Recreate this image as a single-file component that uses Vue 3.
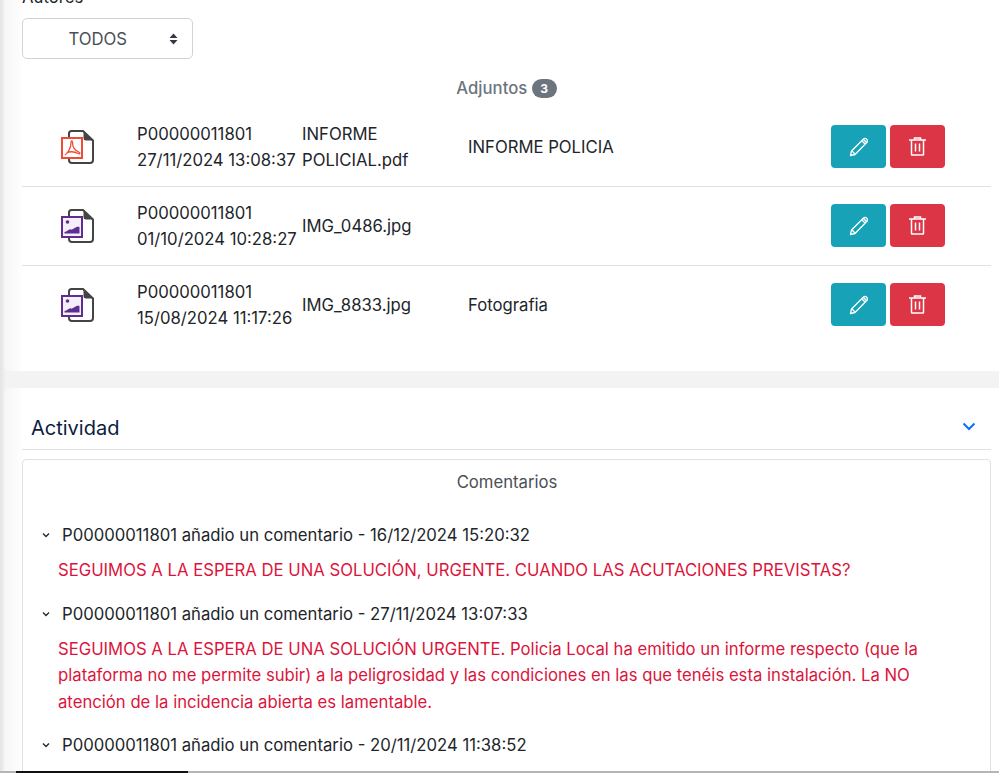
<script setup>
const files = [
  { kind: 'pdf', date: '27/11/2024 13:08:37', name: 'INFORME POLICIAL.pdf', desc: 'INFORME POLICIA' },
  { kind: 'img', date: '01/10/2024 10:28:27', name: 'IMG_0486.jpg', desc: '' },
  { kind: 'img', date: '15/08/2024 11:17:26', name: 'IMG_8833.jpg', desc: 'Fotografia' },
]
const comments = [
  { head: 'P00000011801 añadio un comentario - 16/12/2024 15:20:32', body: 'SEGUIMOS A LA ESPERA DE UNA SOLUCIÓN, URGENTE. CUANDO LAS ACUTACIONES PREVISTAS?' },
  { head: 'P00000011801 añadio un comentario - 27/11/2024 13:07:33', body: 'SEGUIMOS A LA ESPERA DE UNA SOLUCIÓN URGENTE. Policia Local ha emitido un informe respecto (que la plataforma no me permite subir) a la peligrosidad y las condiciones en las que tenéis esta instalación. La NO atención de la incidencia abierta es lamentable.' },
  { head: 'P00000011801 añadio un comentario - 20/11/2024 11:38:52', body: '' },
]
</script>

<template>
  <div class="page">
    <section class="card first">
      <div class="label">Autores</div>
      <div class="select">
        <span class="select-text">TODOS</span>
        <svg class="updown" width="9" height="12" viewBox="0 0 9 12"><path d="M4.500 0.500 8.500 5H.5zM4.500 11.500.5 7h8z" fill="#343a40"/></svg>
      </div>
      <div class="attach-title">Adjuntos <span class="badge">3</span></div>
      <div class="row" v-for="(f, i) in files" :key="i">
        <div class="icon-cell">
          <svg width="36" height="36" viewBox="0 0 36 36" fill="none">
            <path d="M9 8V4.500Q9 2 11.500 2H23L33 11.500V31Q33 34 30 34H12Q9 34 9 31V29" stroke="#444" stroke-width="2"/>
            <path d="M23.500 2 33 11.500H26Q23.500 11.500 23.500 9z" fill="#444"/>
            <template v-if="f.kind === 'pdf'">
              <rect x="2" y="9" width="20" height="20" fill="#fff" stroke="#ef4b37" stroke-width="2"/>
              <path d="M5 26C8 24 11 19 11 13.500 11 11.500 12.500 11.500 12.500 13.500 12.500 19 15.500 22 19.500 23.500 20.500 24 19.500 25.500 18 24.500 14 22 9 22.500 6.500 24" stroke="#ef4b37" stroke-width="1.300"/>
            </template>
            <template v-else>
              <rect x="2" y="9" width="20" height="20" fill="#f3eef8" stroke="#5f2d91" stroke-width="2"/>
              <circle cx="7.500" cy="14" r="1.800" fill="#5f2d91"/>
              <path d="M4.500 24C7.500 24 9 20.500 11 21.500 13 22.500 15 18 19.500 19V25.500H4.500z" fill="#5f2d91"/>
            </template>
          </svg>
        </div>
        <div class="who">P00000011801<br>{{ f.date }}</div>
        <div class="fname">{{ f.name }}</div>
        <div class="desc">{{ f.desc }}</div>
        <div class="actions">
          <button class="btn edit" type="button">
            <svg width="20" height="20" viewBox="0 0 20 20" fill="none"><path d="M1.500 18.500 2.500 14 14 2.500C15 1.500 16.500 1 17.500 2 18.800 3.200 18.500 4.700 17.500 5.700L6 17.500zM3 14 6 17M13 4 16 7" stroke="#fff" stroke-width="1.300" stroke-linejoin="round"/><path d="M14.500 2 18 5.500 17.500 6 14 2.500z" fill="#fff" stroke="#fff"/></svg>
          </button>
          <button class="btn del" type="button">
            <svg width="17" height="19" viewBox="0 0 17 19" fill="none"><path d="M0 3H17M5.500 3V1H11.500V3M2.500 3V17.500Q2.500 18 3 18H14Q14.500 18 14.500 17.500V3M6.500 6.500V14.500M10.500 6.500V14.500" stroke="#fff" stroke-width="1.500"/></svg>
          </button>
        </div>
      </div>
    </section>

    <section class="card second">
      <div class="act-head">
        <h2>Actividad</h2>
        <svg width="14" height="9" viewBox="0 0 14 9" fill="none"><path d="M1.500 1.500 7 7 12.500 1.500" stroke="#0d6efd" stroke-width="2"/></svg>
      </div>
      <div class="box">
        <div class="box-title">Comentarios</div>
        <div class="comment" v-for="(c, i) in comments" :key="i">
          <div class="c-head">
            <svg width="8" height="6" viewBox="0 0 8 6" fill="none"><path d="M1 1.500 4 4.500 7 1.500" stroke="#212529" stroke-width="1.300"/></svg>
            <span>{{ c.head }}</span>
          </div>
          <p v-if="c.body" class="c-body">{{ c.body }}</p>
        </div>
      </div>
    </section>
    <div class="strip"><span class="strip-dark"></span></div>
  </div>
</template>

<style scoped>
.page {
  position: relative;
  height: 773px;
  overflow: hidden;
  box-sizing: border-box;
  padding-left: 4px;
  background: linear-gradient(90deg, #e4e4e4 0, #f3f3f3 6px);
  font-family: Inter, "Liberation Sans", sans-serif;
  font-size: 16.7px;
  color: #212529;
}
.card {
  background: linear-gradient(90deg, #f6f6f6 0, #fff 20px);
  padding-left: 18px;
  padding-right: 8px;
}
.first {
  box-sizing: border-box;
  height: 371px;
  border-radius: 0 0 0 6px;
  margin-bottom: 17px;
}
.label { height: 18px; line-height: 24px; margin-top: 0; position: relative; top: -15px; }
.select {
  width: 171px;
  height: 41px;
  box-sizing: border-box;
  border: 1px solid #ced4da;
  border-radius: 5px;
  display: flex;
  align-items: center;
  color: #495057;
  position: relative;
  padding-left: 45.500px;
}
.updown { position: absolute; right: 14px; top: 14px; }
.attach-title {
  margin-top: 18px;
  margin-bottom: 8px;
  width: 969px;
  height: 23px;
  line-height: 23px;
  text-align: center;
  color: #6c757d;
  font-weight: 500;
}
.badge {
  display: inline-block;
  min-width: 25px;
  box-sizing: border-box;
  height: 19px;
  line-height: 19px;
  border-radius: 10px;
  background: #6c757d;
  color: #fff;
  font-size: 12px;
  font-weight: 700;
  text-align: center;
  vertical-align: 1px;
}
.row {
  height: 79px;
  display: flex;
  align-items: center;
  border-bottom: 1px solid #dee2e6;
  box-sizing: border-box;
  line-height: 26px;
}
.row:last-child { border-bottom-color: transparent; }
.icon-cell { width: 115px; padding-left: 38px; box-sizing: border-box; display: flex; }
.who { width: 165px; white-space: nowrap; }
.fname { width: 166px; padding-right: 30px; box-sizing: border-box; }
.desc { flex: 1; }
.actions { display: flex; gap: 4px; margin-right: 46px; margin-top: -1px; }
.btn {
  width: 55px;
  height: 43px;
  border: 0;
  border-radius: 4px;
  padding: 0;
  display: flex;
  align-items: center;
  justify-content: center;
}
.edit { background: #17a2b8; }
.del { background: #dc3545; }
.second {
  border-radius: 6px 0 0 0;
  height: 400px;
}
.act-head {
  height: 62px;
  border-bottom: 1px solid #dee2e6;
  box-sizing: border-box;
  display: flex;
  align-items: center;
  justify-content: space-between;
  padding: 16px 15px 0 9px;
}
.act-head h2 {
  margin: 0;
  font-size: 20px;
  font-weight: 400;
  color: #0b1d3f;
  position: relative;
  top: 1px;
}
.box {
  margin-top: 9px;
  border: 1px solid #dee2e6;
  border-radius: 4px;
  height: 400px;
  padding-left: 19px;
  padding-right: 40px;
}
.box-title {
  text-align: center;
  color: #495057;
  line-height: 24px;
  padding-top: 10px;
  padding-left: 22px;
  height: 44px;
  margin-bottom: 9px;
}
.c-head {
  display: flex;
  align-items: center;
  gap: 12px;
  height: 24px;
  line-height: 24px;
}
.c-body {
  margin: 10px 0 18px 16px;
  line-height: 26.500px;
  color: #dc143c;
}
.strip {
  position: absolute;
  left: 0;
  right: 0;
  bottom: 0;
  height: 2px;
  background: #b5b5b5;
}
.strip-dark {
  display: block;
  margin-left: 16px;
  width: 172px;
  height: 2px;
  background: #111;
}
</style>
